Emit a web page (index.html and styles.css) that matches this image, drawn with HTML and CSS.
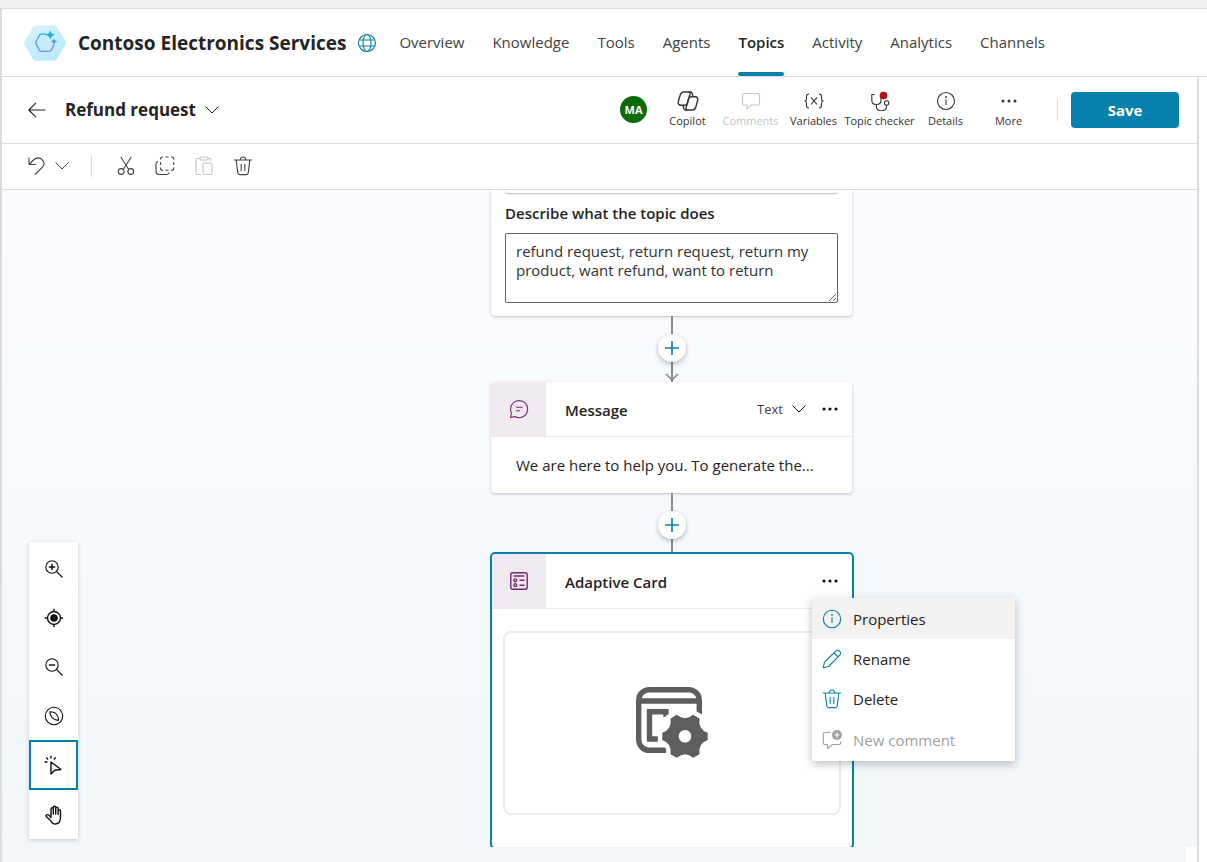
FILE: index.html
```html
<!DOCTYPE html>
<html lang="en">
<head>
<meta charset="utf-8">
<meta name="viewport" content="width=device-width, initial-scale=1">
<title>Contoso Electronics Services - Topics</title>
<link rel="stylesheet" href="styles.css">
</head>
<body>
<div class="strip"></div>
<div class="app">
  <header class="header">
    <svg class="logo" viewBox="1 1 40 34" aria-hidden="true">
      <defs>
        <linearGradient id="hex" x1="0" y1="0" x2="0.6" y2="1"><stop offset="0" stop-color="#d9f3fb"/><stop offset="1" stop-color="#b9e9fa"/></linearGradient>
        <linearGradient id="ring" x1="0" y1="0" x2="0.4" y2="1"><stop offset="0" stop-color="#2fb0e0"/><stop offset="1" stop-color="#8a86f0"/></linearGradient>
      </defs>
      <path d="M12.500 1h17q2 0 3 1.800l7.800 13.400q1 1.800 0 3.600l-7.800 13.400q-1 1.800-3 1.800h-17q-2 0-3-1.800l-7.800-13.400q-1-1.800 0-3.600l7.800-13.400q1-1.800 3-1.800z" fill="url(#hex)"/>
      <path d="M22.500 9.500h-5.200q-1 0-1.500.9l-3.300 6.300q-.5 1 0 2l3.300 6.300q.5 1 1.500 1h7.900q1 0 1.500-1l2.600-4.800" fill="none" stroke="url(#ring)" stroke-width="1.300" stroke-linecap="round"/>
      <path d="M26 5.500q.7 4 4.800 4.700q-4.100.8-4.800 4.800q-.8-4-4.800-4.800q4-.7 4.800-4.700z" fill="#27b2e4"/>
      <path d="M29.500 13q.6 3 3.400 3.400q-2.800.6-3.400 3.400q-.5-2.800-3.300-3.400q2.800-.4 3.300-3.400z" fill="#4a9df0"/>
    </svg>
    <h1 class="title">Contoso Electronics Services</h1>
    <svg class="icon globe" viewBox="0 0 20 20" aria-hidden="true"><circle cx="10" cy="10" r="8.500"/><ellipse cx="10" cy="10" rx="4" ry="8.500"/><path d="M2.200 7h15.600M2.200 13h15.600"/></svg>
    <nav class="tabs">
      <a class="tab" href="#overview">Overview</a>
      <a class="tab" href="#knowledge">Knowledge</a>
      <a class="tab" href="#tools">Tools</a>
      <a class="tab" href="#agents">Agents</a>
      <a class="tab active" href="#topics" aria-current="page">Topics</a>
      <a class="tab" href="#activity">Activity</a>
      <a class="tab" href="#analytics">Analytics</a>
      <a class="tab" href="#channels">Channels</a>
    </nav>
  </header>

  <div class="workspace">
    <div class="commandbar">
      <button class="plain" aria-label="Back"><svg class="icon" viewBox="0 0 20 20"><path d="M18.500 10H2M9 2.800L1.800 10L9 17.200"/></svg></button>
      <h2 class="topic">Refund request</h2>
      <button class="plain" aria-label="Topic menu"><svg class="icon chevron" viewBox="0 0 16 16"><path d="M1.500 4.500L8 11l6.500-6.500"/></svg></button>
      <div class="commands">
        <span class="avatar">MA</span>
        <button class="command"><svg class="icon copilot" viewBox="0 0 22 20"><g id="ribbon"><path class="heavy" d="M6.800 1h4.700q2 0 1.500 2l-2.500 9q-.6 2.200-2.600 2.200H4.200q-3.700 0-2.900-3.700l1.900-6.500q.9-3 3.600-3z"/><path class="heavy" d="M11.500 1h1.800q1.600 0 2 1.600l.7 3.200"/></g><use href="#ribbon" transform="rotate(180 11 10)"/></svg><span>Copilot</span></button>
        <button class="command" disabled><svg class="icon" viewBox="0 0 20 20"><path d="M3 2.500h14q1.500 0 1.500 1.500v8.500q0 1.500-1.500 1.500h-6.500l-4.500 3.800V14H3q-1.500 0-1.500-1.500V4q0-1.500 1.500-1.500z"/></svg><span>Comments</span></button>
        <button class="command"><svg class="icon" viewBox="0 0 20 20"><path d="M5 3q-2.500 0-2.500 2.200v2.300q0 2.300-1.700 2.500q1.700.2 1.700 2.500v2.300Q2.500 17 5 17M15 3q2.500 0 2.500 2.200v2.300q0 2.300 1.700 2.500q-1.700.2-1.700 2.500v2.300Q17.500 17 15 17M7 6.300l6 7.200M13 6.300l-6 7.200"/></svg><span>Variables</span></button>
        <button class="command wide"><svg class="icon" viewBox="0 0 20 20"><path d="M4.500 3.500H1.800v6q0 4 4.500 4q4.700 0 4.700-4V6M6.400 13.500v2.200q0 4 5 4q5.200 0 5.200-4.700v-.7"/><circle cx="16.600" cy="12" r="2.200"/><circle class="alert" cx="13.500" cy="4.500" r="3.800"/></svg><span>Topic checker</span></button>
        <button class="command"><svg class="icon" viewBox="0 0 20 20"><circle cx="10" cy="10" r="8.500"/><path d="M10 8.500V14"/><circle class="dot" cx="10" cy="6" r=".9"/></svg><span>Details</span></button>
        <button class="command"><svg class="icon" viewBox="0 0 20 20"><circle class="dot" cx="4" cy="10" r="1.500"/><circle class="dot" cx="10" cy="10" r="1.500"/><circle class="dot" cx="16" cy="10" r="1.500"/></svg><span>More</span></button>
        <span class="divider"></span>
        <button class="save">Save</button>
      </div>
    </div>

    <div class="toolbar">
      <button class="plain" aria-label="Undo"><svg class="icon" viewBox="0 0 20 20"><path d="M2 1.500v7h6.800M2.500 8L7 3.500q4-3 7.500-.5q4.500 4 1 8.200L8 18.500"/></svg></button>
      <button class="plain" aria-label="Undo history"><svg class="icon chevron" viewBox="0 0 16 16"><path d="M1.500 4.500L8 11l6.500-6.500"/></svg></button>
      <span class="divider short"></span>
      <div class="edits">
        <button class="plain" aria-label="Cut"><svg class="icon" viewBox="0 0 20 20"><path d="M4.800 1l7.700 12M15.200 1L7.500 13"/><circle cx="5.200" cy="15.500" r="2.900"/><circle cx="14.800" cy="15.500" r="2.900"/></svg></button>
        <button class="plain" aria-label="Copy"><svg class="icon" viewBox="0 0 20 20"><path d="M8 1h-.5q-2 0-2 2v.5M10.500 1h3M16 1h.7q2 0 2 2v.5M18.700 6v3M18.700 11.500v.7q0 2-2 2H16M13.500 14.200h-3M8 14.200h-.5q-2 0-2-2v-.7M5.500 9V6M3 5.500Q1 6 1 8v7.500q0 3 3 3h7q2.800 0 3-2"/></svg></button>
        <button class="plain" aria-label="Paste" disabled><svg class="icon" viewBox="0 0 20 20"><path d="M6 2.500H3.500Q2 2.500 2 4v13q0 1.500 1.500 1.500H7M14 2.500h1.500Q17 2.500 17 4v1"/><rect x="6" y="1" width="8" height="3" rx="1.200"/><rect x="9" y="7" width="9" height="11.500" rx="1.500"/></svg></button>
        <button class="plain" aria-label="Delete"><svg class="icon" viewBox="0 0 20 20"><path d="M1 4h18M3.200 4l1.500 12.600q.3 2 2.200 2h6.200q1.900 0 2.200-2L16.800 4M7.300 4q0-3 2.700-3t2.700 3M8.200 8v7M11.800 8v7"/></svg></button>
      </div>
    </div>

    <main class="canvas">
      <div class="viewport">
        <div class="flow">
          <section class="node trigger">
            <div class="field-end"></div>
            <label for="describe">Describe what the topic does</label>
            <textarea id="describe">refund request, return request, return my product, want refund, want to return</textarea>
          </section>

          <div class="link arrow">
            <button class="add" aria-label="Add node"><svg class="icon" viewBox="0 0 20 20"><path d="M10 3v14M3 10h14"/></svg></button>
            <svg class="head" viewBox="0 0 14 8" aria-hidden="true"><path d="M1 1l6 6 6-6"/></svg>
          </div>

          <section class="node">
            <div class="node-head">
              <span class="badge"><svg class="icon" viewBox="0 0 20 20"><path d="M1.500 18.500L2.500 14A8.500 8.500 0 1 1 6 17.600zM7 8.300h6.500M7 11.700h4"/></svg></span>
              <h3>Message</h3>
              <span class="kind"><select aria-label="Message type"><option>Text</option></select><svg class="icon chevron" viewBox="0 0 16 16"><path d="M1.500 4.500L8 11l6.500-6.500"/></svg></span>
              <button class="plain more" aria-label="More options"><svg class="icon" viewBox="0 0 20 20"><circle class="dot" cx="4" cy="10" r="1.600"/><circle class="dot" cx="10" cy="10" r="1.600"/><circle class="dot" cx="16" cy="10" r="1.600"/></svg></button>
            </div>
            <p class="message">We are here to help you. To generate the...</p>
          </section>

          <div class="link">
            <button class="add" aria-label="Add node"><svg class="icon" viewBox="0 0 20 20"><path d="M10 3v14M3 10h14"/></svg></button>
          </div>

          <section class="node selected">
            <div class="node-head">
              <span class="badge"><svg class="icon" viewBox="0 0 20 20"><rect class="heavy" x="1.800" y="1.800" width="16.400" height="16.400" rx="2"/><path class="heavy" d="M4.500 5h11M10.500 9.300h5M10.500 14.200h5"/><circle class="heavy" cx="6.300" cy="9.300" r="1.400"/><circle class="heavy" cx="6.300" cy="14.200" r="1.400"/></svg></span>
              <h3>Adaptive Card</h3>
              <button class="plain more" aria-label="More options" aria-expanded="true"><svg class="icon" viewBox="0 0 20 20"><circle class="dot" cx="4" cy="10" r="1.600"/><circle class="dot" cx="10" cy="10" r="1.600"/><circle class="dot" cx="16" cy="10" r="1.600"/></svg></button>
              <div class="menu" role="menu">
                <button class="item current" role="menuitem"><svg class="icon" viewBox="0 0 20 20"><circle cx="10" cy="10" r="8.700"/><path d="M10 8.500V14"/><circle class="dot" cx="10" cy="6" r=".9"/></svg>Properties</button>
                <button class="item" role="menuitem"><svg class="icon" viewBox="0 0 20 20"><path d="M1.200 18.800l1.300-5.600L13.800 2q2-1.500 3.700 0t.5 3.900L6.600 17.500zM12 3.800l4.200 4.200"/></svg>Rename</button>
                <button class="item" role="menuitem"><svg class="icon" viewBox="0 0 20 20"><path d="M1 4h18M3.200 4l1.500 12.600q.3 2 2.200 2h6.200q1.900 0 2.200-2L16.800 4M7.300 4q0-3 2.700-3t2.700 3M8.200 8v7M11.800 8v7"/></svg>Delete</button>
                <button class="item" role="menuitem" disabled><svg class="icon" viewBox="0 0 20 20"><path d="M8.500 2.500H3Q1.300 2.500 1.300 4.200v8.600q0 1.700 1.700 1.700h2.500v4l5-4H17q1.700 0 1.700-1.700v-1.500"/><circle class="dot" cx="15" cy="5" r="5"/><path class="plus" d="M15 2.300v5.400M12.300 5h5.400"/></svg>New comment</button>
              </div>
            </div>
            <div class="preview">
              <svg class="card-art" viewBox="0 0 74 74" aria-hidden="true">
                <rect x="3.700" y="3.700" width="60.600" height="60.600" rx="10.500"/>
                <path d="M4 15h60M31 31v-5.200H14.500v27.200H28"/>
                <path class="mask" d="M50 50.300L48 28h26v46H34z"/>
                <path class="gear" d="M72.700 53.900Q62.600 57.550 64.500 68.200L58.200 71.800Q50 64.800 41.800 71.800L35.500 68.200Q37.400 57.550 27.300 53.900V46.700Q37.400 43.050 35.500 32.400L41.800 28.800Q50 35.800 58.200 28.800L64.500 32.400Q62.600 43.050 72.700 46.700Z"/>
                <circle cx="50" cy="50.300" r="6.300" class="hub"/>
              </svg>
            </div>
          </section>
        </div>

        <div class="tools">
          <button aria-label="Zoom in"><svg class="icon" viewBox="0 0 20 20"><circle cx="8" cy="8" r="6.200"/><path d="M12.500 12.500L18.500 18.500"/><path class="heavy" d="M8 4.800v6.400M4.800 8h6.400"/></svg></button>
          <button aria-label="Reset view"><svg class="icon" viewBox="0 0 20 20"><circle class="heavy" cx="10" cy="10" r="6.500"/><circle class="dot" cx="10" cy="10" r="3.800"/><path class="heavy" d="M10 .8v2.700M10 16.500v2.700M.8 10h2.700M16.500 10h2.700"/></svg></button>
          <button aria-label="Zoom out"><svg class="icon" viewBox="0 0 20 20"><circle cx="8" cy="8" r="6.200"/><path d="M12.500 12.500L18.500 18.500"/><path class="heavy" d="M4.800 8h6.400"/></svg></button>
          <button aria-label="Minimap"><svg class="icon" viewBox="0 0 20 20"><circle cx="10" cy="10" r="8.700"/><path d="M5.800 5.800q5 0 7 3t1.600 5.600q-4.700-.6-6.600-3.200t-2-5.400z"/></svg></button>
          <button class="on" aria-label="Select" aria-pressed="true"><svg class="icon" viewBox="0 0 20 20"><path class="heavy" d="M7 7v12l3.800-3.800 6.200-.7z"/><path class="heavy" d="M7 .8v2.800M2.300 2.500l1.800 2M11.700 2.500l-1.800 2M.5 7h3"/></svg></button>
          <button aria-label="Pan"><svg class="icon" viewBox="0 0 20 20"><path class="heavy" d="M7 12.500V4q0-1.300 1.100-1.300T9.300 4v5V2.500q0-1.200 1.200-1.200t1.200 1.200V9V3.500q0-1.200 1.200-1.200t1.200 1.200v6V6q0-1.200 1.200-1.200T16.500 6v6.500q0 6-5 6.500q-3.300 0-5-3.500L2.300 11.500q-.7-1.200.3-1.700q1.500-.5 2.700.8z"/></svg></button>
        </div>
      </div>
      <div class="gutter"><span class="corner"></span></div>
    </main>
  </div>
</div>
</body>
</html>
```

FILE: styles.css
```css
* { box-sizing: border-box; }

body {
  margin: 0;
  height: 100vh;
  overflow: hidden;
  display: flex;
  flex-direction: column;
  background: #fff;
  color: #242424;
  font-family: "Open Sans", "Noto Sans", sans-serif;
  font-size: 15px;
}

h1, h2, h3, p { margin: 0; font-weight: 600; }

button {
  margin: 0;
  padding: 0;
  border: 0;
  background: none;
  color: inherit;
  font: inherit;
}

.icon {
  display: block;
  flex: none;
  width: 20px;
  height: 20px;
  fill: none;
  stroke: currentColor;
  stroke-width: 1.1;
  stroke-linejoin: round;
}
.icon .heavy { stroke-width: 1.4; }
.icon .dot { fill: currentColor; stroke: none; }
.icon .alert { fill: #b10e1c; stroke: none; }
.icon .plus { stroke: #fff; }
.chevron { width: 16px; height: 16px; stroke-width: 1; }
.copilot { width: 22px; }

.strip { flex: none; height: 9px; background: #efefef; border-bottom: 1px solid #dcdcdc; }
.app {
  flex: 1;
  min-height: 0;
  display: flex;
  flex-direction: column;
  border-left: 2px solid #dcdcdc;
}

.header {
  flex: none;
  display: flex;
  align-items: center;
  height: 68px;
  padding-left: 22px;
  border-bottom: 1px solid #dcdcdc;
}
.logo { flex: none; width: 42px; height: 36px; }
.title { margin: 0 11px 0 12px; font-size: 19px; font-weight: 700; white-space: nowrap; }
.globe { color: #0a7ba8; }
.tabs { display: flex; align-self: stretch; gap: 28px; margin-left: 22px; }
.tab {
  display: flex;
  align-items: center;
  padding-bottom: 2px;
  color: #424242;
  text-decoration: none;
}
.tab.active {
  position: relative;
  color: #242424;
  font-weight: 600;
}
.tab.active::after {
  content: "";
  position: absolute;
  left: 0;
  right: 0;
  bottom: 0;
  height: 4px;
  border-radius: 2px;
  background: #0780ac;
}

.workspace {
  flex: 1;
  min-height: 0;
  display: flex;
  flex-direction: column;
  margin-right: 8px;
  border-right: 2px solid #dcdcdf;
}
.commandbar {
  flex: none;
  display: flex;
  align-items: center;
  height: 67px;
  padding: 0 18px 1px 25px;
  border-bottom: 1px solid #dcdcdc;
}
.topic { margin: 0 8px 0 18px; font-size: 17px; font-weight: 700; white-space: nowrap; }
.commands { display: flex; align-items: center; margin-left: auto; }
.avatar {
  width: 27px;
  margin-right: 9px;
  border-radius: 50%;
  background: #0b6a0b;
  color: #fff;
  font-size: 11px;
  font-weight: 700;
  line-height: 27px;
  text-align: center;
}
.command {
  display: flex;
  flex-direction: column;
  align-items: center;
  gap: 2px;
  width: 63px;
  color: #333;
  font-size: 11px;
  line-height: 15px;
  white-space: nowrap;
}
.command.wide { width: 69px; }
.command:disabled, .plain:disabled { color: #c4c4c4; }
.divider { width: 1px; height: 22px; margin: 0 13px 0 17px; background: #dcdcdc; }
.save {
  width: 108px;
  height: 36px;
  border-radius: 4px;
  background: #0780ac;
  color: #fff;
  font-weight: 700;
}

.toolbar {
  flex: none;
  display: flex;
  align-items: center;
  height: 46px;
  padding: 0 0 1px 25px;
  border-bottom: 1px solid #dcdcdc;
  color: #424242;
}
.toolbar > .plain + .plain { margin-left: 7px; }
.divider.short { margin: 0 24px 0 21px; }
.edits { display: flex; gap: 19px; }

.canvas {
  flex: 1;
  min-height: 0;
  display: flex;
  flex-direction: column;
  background: linear-gradient(#fafbff, #f1f7fb);
}
.viewport { position: relative; flex: 1; min-height: 0; overflow: hidden; }
.gutter { flex: none; display: flex; justify-content: flex-end; height: 15px; }
.corner { width: 11px; background: #fff; }

.flow {
  position: absolute;
  top: 0;
  left: 488px;
  width: 364px;
  display: flex;
  flex-direction: column;
  align-items: stretch;
}
.node {
  margin: 0 2px 0 1px;
  border-radius: 4px;
  background: #fff;
  box-shadow: 0 1px 3px rgba(0, 0, 0, .22);
}
.trigger { padding: 0 14px 13px; border-radius: 0 0 4px 4px; }
.trigger label { display: block; margin: 10px 0; font-weight: 600; line-height: 20px; font-size: 15px; }
.field-end { height: 3px; border-radius: 0 0 4px 4px; box-shadow: 0 1px 2px rgba(0, 0, 0, .3); }
.trigger textarea {
  display: block;
  width: 100%;
  height: 70px;
  padding: 8px 10px;
  border: 1px solid #616161;
  border-radius: 2px;
  background: #fff;
  color: #333;
  font: inherit;
  line-height: 19px;
}

.link {
  display: flex;
  flex-direction: column;
  align-items: center;
  height: 59px;
  padding-top: 18px;
  background: linear-gradient(#8a8a8a, #8a8a8a) center / 2px 100% no-repeat;
}
.link.arrow { height: 66px; padding-bottom: 1px; }
.add {
  width: 28px;
  height: 28px;
  padding: 4px;
  border-radius: 50%;
  background: #fff;
  color: #0780ac;
  box-shadow: 0 2px 5px rgba(0, 0, 0, .25);
}
.add .icon { stroke-width: 1.6; }
.head { width: 14px; height: 8px; margin-top: auto; fill: none; stroke: #8a8a8a; stroke-width: 1.6; }

.node-head {
  position: relative;
  display: flex;
  align-items: center;
  height: 55px;
  padding-right: 12px;
  border-bottom: 1px solid #ebebeb;
}
.badge {
  display: grid;
  place-items: center;
  align-self: stretch;
  width: 55px;
  border-radius: 4px 0 0 0;
  background: #f0e9f0;
  color: #742774;
}
.node-head h3 { margin: 2px auto 0 19px; font-size: 15px; }
.kind { display: flex; align-items: center; gap: 8px; margin-right: 13px; }
.kind select {
  padding: 0;
  border: 0;
  appearance: none;
  background: none;
  color: #424242;
  font: inherit;
  font-size: 13px;
}
.more { color: #111; }
.message { padding: 18px 25px; font-weight: 400; line-height: 20px; white-space: nowrap; }

.selected {
  margin: 0;
  border: 2px solid #0780ac;
  border-radius: 5px;
  box-shadow: none;
}
.selected .badge { width: 54px; }
.preview {
  display: grid;
  place-items: center;
  height: 184px;
  margin: 22px 11px 32px;
  border: 2px solid #ebebeb;
  border-radius: 8px;
}
.card-art { width: 74px; height: 74px; fill: none; stroke: #5f5e5d; stroke-width: 5.4; }
.card-art .mask { fill: #fff; stroke: none; }
.card-art .gear { fill: #5f5e5d; stroke: #fff; stroke-width: 9; paint-order: stroke; }
.card-art .hub { fill: #fff; stroke: none; }

.menu {
  position: absolute;
  top: 44px;
  left: 320px;
  z-index: 2;
  width: 203px;
  padding-bottom: 1px;
  border-radius: 2px;
  overflow: hidden;
  background: #fff;
  box-shadow: 0 3px 10px rgba(0, 0, 0, .25);
}
.item {
  display: flex;
  align-items: center;
  gap: 11px;
  width: 100%;
  height: 40px;
  padding-left: 10px;
}
.item .icon { color: #0780ac; }
.item.current { height: 41px; background: #f3f2f1; }
.item:disabled { height: 41px; }
.item:disabled, .item:disabled .icon { color: #a19f9d; }

.tools {
  position: absolute;
  left: 27px;
  bottom: 8px;
  width: 49px;
  display: flex;
  flex-direction: column;
  padding-top: 2px;
  background: #fff;
  box-shadow: 0 1px 4px rgba(0, 0, 0, .2);
  color: #111;
}
.tools button { display: grid; place-items: center; height: 49px; }
.tools .on { height: 50px; border: 2px solid #0780ac; }
```
